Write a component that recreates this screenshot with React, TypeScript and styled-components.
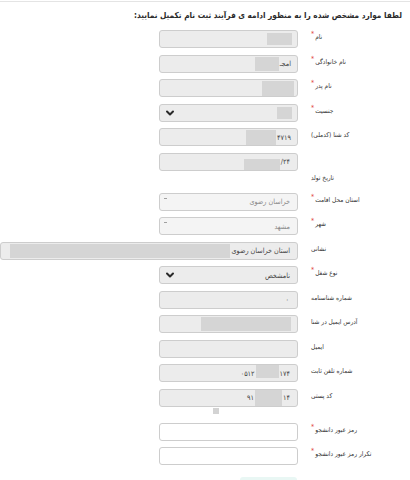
import React from 'react'
import styled, { createGlobalStyle } from 'styled-components'
import { ChevronDown } from 'lucide-react'

const GlobalStyle = createGlobalStyle`
  html, body {
    margin: 0;
    padding: 0;
    background: #ffffff;
  }
  body {
    font-family: 'DejaVu Sans Condensed', 'DejaVu Sans', 'Noto Sans', sans-serif;
    color: #333333;
  }
`

const Page = styled.div`
  width: 410px;
  height: 480px;
  overflow: hidden;
`

const TopRule = styled.div`
  height: 1px;
  margin-top: 1px;
  background: #e4e4e4;
`

const Heading = styled.h1`
  direction: rtl;
  margin: 6px 8px 0 0;
  height: 15px;
  font-size: 8.2px;
  line-height: 15px;
  font-weight: bold;
  color: #2b2b2b;
  white-space: nowrap;
`

const Form = styled.div`
  display: flex;
  flex-direction: column;
  gap: 6.5px;
  margin-top: 7px;
`

const Row = styled.div<{ $twoLine?: boolean }>`
  display: grid;
  grid-template-columns: 159px 139px 1fr;
  grid-template-rows: ${(p) => (p.$twoLine ? '18px 15.5px' : '18px')};
`

const Label = styled.div<{ $below?: boolean }>`
  grid-column: 3;
  grid-row: ${(p) => (p.$below ? 2 : 1)};
  justify-self: start;
  align-self: center;
  direction: rtl;
  margin: 0 0 ${(p) => (p.$below ? 0 : 3)}px 13px;
  font-size: 6.5px;
  line-height: 9px;
  color: #333333;
  white-space: nowrap;
`

const Star = styled.span`
  position: relative;
  top: -3px;
  margin-right: 1px;
  color: #e0403a;
  font-size: 7px;
`

const Field = styled.div<{ $tone?: 'filled' | 'white' | 'soft'; $wide?: boolean; $pad?: number }>`
  grid-column: ${(p) => (p.$wide ? '1 / 3' : '2')};
  grid-row: 1;
  box-sizing: border-box;
  height: 18px;
  display: flex;
  direction: rtl;
  align-items: center;
  padding: 0 ${(p) => p.$pad ?? 6}px 0 4px;
  border: 1px solid #cdcdcd;
  border-radius: 3px;
  background: ${(p) => (p.$tone === 'white' ? '#ffffff' : p.$tone === 'soft' ? '#f4f4f4' : '#ececec')};
  font-size: 7.2px;
  color: #444444;
  overflow: hidden;
`

const Value = styled.span<{ $muted?: boolean; $top?: boolean }>`
  align-self: ${(p) => (p.$top ? 'flex-start' : 'center')};
  margin-top: ${(p) => (p.$top ? 3 : 0)}px;
  color: ${(p) => (p.$muted ? '#8a8a8a' : '#444444')};
  white-space: nowrap;
  unicode-bidi: plaintext;
`

const Redact = styled.span<{ $w?: number; $h: number; $align?: 'start' | 'end' | 'center'; $fill?: boolean; $end?: number }>`
  flex: ${(p) => (p.$fill ? '1' : `0 0 ${p.$w}px`)};
  height: ${(p) => p.$h}px;
  align-self: ${(p) => (p.$align === 'start' ? 'flex-start' : p.$align === 'end' ? 'flex-end' : 'center')};
  margin-inline-start: 1px;
  margin-inline-end: ${(p) => p.$end ?? 1}px;
  background: #d5d5d5;
`

const Chevron = styled(ChevronDown)`
  margin-inline-start: auto;
  color: #2a2a2a;
`

const Caret = styled.span`
  margin-inline-start: auto;
  align-self: flex-start;
  margin-top: 4px;
  width: 3px;
  height: 1px;
  background: #a0a0a0;
`

const MarkerRow = styled.div`
  display: flex;
  margin: -5.5px 0 2.5px 213px;
`

const Marker = styled.span`
  width: 6px;
  height: 6px;
  background: #d3d3d3;
`

const ButtonRow = styled.div`
  display: flex;
  margin: 5.5px 0 0 240px;
`

const SubmitButton = styled.button`
  width: 57px;
  height: 22px;
  border: none;
  border-radius: 3px;
  background: #e9f7f4;
`

function Req({ children }: { children: React.ReactNode }) {
  return (
    <>
      {children}
      <Star>*</Star>
    </>
  )
}

export default function App() {
  return (
    <Page>
      <GlobalStyle />
      <TopRule />
      <Heading>لطفا موارد مشخص شده را به منظور ادامه ی فرآیند ثبت نام تکمیل نمایید:</Heading>
      <Form>
        <Row>
          <Field $pad={4}>
            <Redact $w={25} $h={12} />
          </Field>
          <Label>
            <Req>نام</Req>
          </Label>
        </Row>
        <Row>
          <Field>
            <Value>امجـ</Value>
            <Redact $w={24} $h={14} />
          </Field>
          <Label>
            <Req>نام خانوادگی</Req>
          </Label>
        </Row>
        <Row>
          <Field $pad={2}>
            <Redact $w={32} $h={15} />
          </Field>
          <Label>
            <Req>نام پدر</Req>
          </Label>
        </Row>
        <Row>
          <Field $pad={4}>
            <Redact $w={15} $h={12} />
            <Chevron size={12} strokeWidth={4} />
          </Field>
          <Label>
            <Req>جنسیت</Req>
          </Label>
        </Row>
        <Row>
          <Field>
            <Value>۴۷۱۹</Value>
            <Redact $w={30} $h={15} />
          </Field>
          <Label>کد شنا (کدملی)</Label>
        </Row>
        <Row $twoLine>
          <Field $pad={7}>
            <Value $top>/۲۴</Value>
            <Redact $w={36} $h={11} $align="end" />
          </Field>
          <Label $below>تاریخ تولد</Label>
        </Row>
        <Row>
          <Field $tone="soft" $pad={7}>
            <Value $muted>خراسان رضوی</Value>
            <Caret />
          </Field>
          <Label>
            <Req>استان محل اقامت</Req>
          </Label>
        </Row>
        <Row>
          <Field $tone="soft" $pad={7}>
            <Value $muted>مشهد</Value>
            <Caret />
          </Field>
          <Label>
            <Req>شهر</Req>
          </Label>
        </Row>
        <Row>
          <Field $wide $pad={7}>
            <Value>استان خراسان رضوی</Value>
            <Redact $fill $h={14} $end={5} />
          </Field>
          <Label>نشانی</Label>
        </Row>
        <Row>
          <Field $pad={7}>
            <Value>نامشخص</Value>
            <Chevron size={12} strokeWidth={4} />
          </Field>
          <Label>
            <Req>نوع شغل</Req>
          </Label>
        </Row>
        <Row>
          <Field $pad={8}>
            <Value>۰</Value>
          </Field>
          <Label>شماره شناسنامه</Label>
        </Row>
        <Row>
          <Field $pad={5}>
            <Redact $w={90} $h={14} />
          </Field>
          <Label>آدرس ایمیل در شنا</Label>
        </Row>
        <Row>
          <Field />
          <Label>ایمیل</Label>
        </Row>
        <Row>
          <Field $pad={7}>
            <Value>۱۷۴</Value>
            <Redact $w={23} $h={13} $align="start" />
            <Value>۰۵۱۲</Value>
          </Field>
          <Label>شماره تلفن ثابت</Label>
        </Row>
        <Row>
          <Field $pad={7}>
            <Value>۱۴</Value>
            <Redact $w={27} $h={17} />
            <Value>۹۱</Value>
          </Field>
          <Label>کد پستی</Label>
        </Row>
        <MarkerRow>
          <Marker />
        </MarkerRow>
        <Row>
          <Field $tone="white" />
          <Label>
            <Req>رمز عبور دانشجو</Req>
          </Label>
        </Row>
        <Row>
          <Field $tone="white" />
          <Label>
            <Req>تکرار رمز عبور دانشجو</Req>
          </Label>
        </Row>
        <ButtonRow>
          <SubmitButton aria-label="ثبت" />
        </ButtonRow>
      </Form>
    </Page>
  )
}
